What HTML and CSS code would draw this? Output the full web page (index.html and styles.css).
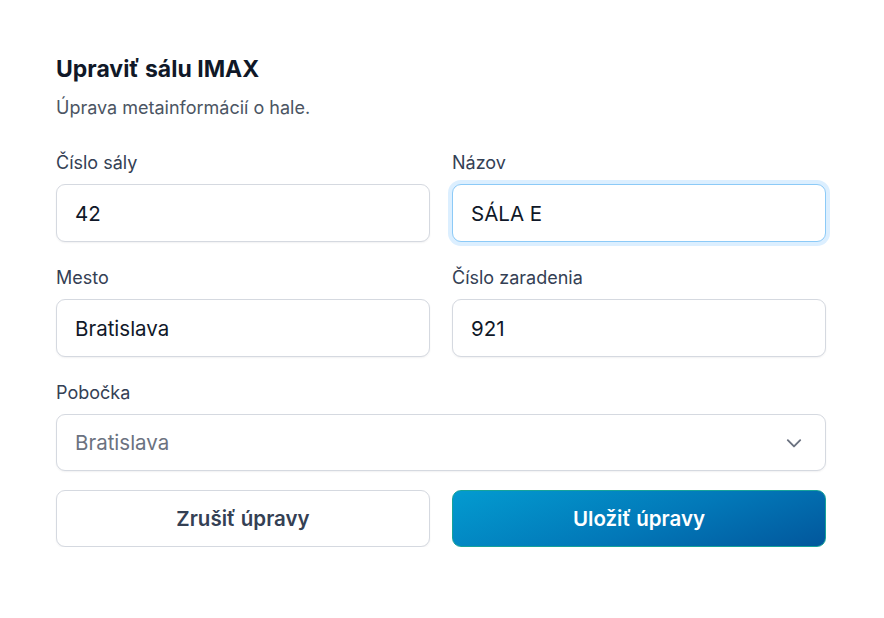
FILE: index.html
```html
<!DOCTYPE html>
<html lang="sk">
<head>
<meta charset="utf-8">
<title>Upraviť sálu IMAX</title>
<link rel="stylesheet" href="styles.css">
</head>
<body>
<div class="page">
  <form class="card">
    <h1 class="title">Upraviť sálu IMAX</h1>
    <p class="subtitle">Úprava metainformácií o hale.</p>
    <div class="grid">
      <label class="field">
        <span class="label">Číslo sály</span>
        <span class="input">42</span>
      </label>
      <label class="field">
        <span class="label">Názov</span>
        <span class="input focused">SÁLA E</span>
      </label>
      <label class="field">
        <span class="label">Mesto</span>
        <span class="input">Bratislava</span>
      </label>
      <label class="field">
        <span class="label">Číslo zaradenia</span>
        <span class="input">921</span>
      </label>
      <label class="field full">
        <span class="label">Pobočka</span>
        <span class="input select">
          <span class="placeholder">Bratislava</span>
          <svg class="chev" width="18" height="18" viewBox="0 0 16 16" fill="none"><path d="M2.5 5.5 8 11l5.5-5.5" stroke="#6b7280" stroke-width="1.7" stroke-linecap="round" stroke-linejoin="round"/></svg>
        </span>
      </label>
    </div>
    <div class="actions">
      <button type="button" class="btn cancel">Zrušiť úpravy</button>
      <button type="button" class="btn save">Uložiť úpravy</button>
    </div>
  </form>
</div>
</body>
</html>
```
FILE: styles.css
```css
* { box-sizing: border-box; }
html, body { margin: 0; background: #ffffff; }
body {
  font-family: Inter, "Noto Sans", "Liberation Sans", sans-serif;
  color: #111827;
}
.page { padding: 54px 58px 0 56px; }
.card { width: 770px; }
.title {
  margin: 0;
  font-size: 23px;
  line-height: 30px;
  font-weight: 650;
  color: #101828;
}
.subtitle {
  margin: 9.5px 0 0;
  font-size: 18px;
  line-height: 27px;
  color: #4b5563;
}
.grid {
  margin-top: 28px;
  display: grid;
  grid-template-columns: 1fr 1fr;
  column-gap: 22px;
  row-gap: 21.5px;
}
.field { display: flex; flex-direction: column; gap: 8.5px; }
.field.full { grid-column: 1 / -1; }
.label {
  font-size: 18px;
  line-height: 27px;
  font-weight: 400;
  color: #344054;
}
.input {
  height: 58px;
  display: flex;
  align-items: center;
  padding: 0 18px;
  border: 1.5px solid #d5d9e0;
  border-radius: 9px;
  background: #fff;
  font-size: 20.5px;
  color: #101828;
  box-shadow: 0 1px 2px rgba(16, 24, 40, 0.06);
}
.input.focused {
  border-color: #8ccaf7;
  box-shadow: 0 0 0 4px #dcefff;
}
.select { justify-content: space-between; height: 57px; }
.placeholder { color: #6b7280; }
.chev { margin-right: 4px; }
.actions {
  margin-top: 19px;
  display: grid;
  grid-template-columns: 1fr 1fr;
  column-gap: 22px;
}
.btn {
  height: 57px;
  border-radius: 9px;
  font-family: inherit;
  font-size: 20.5px;
  font-weight: 600;
  cursor: pointer;
}
.cancel {
  background: #fff;
  border: 1.5px solid #d5d9e0;
  color: #344054;
  box-shadow: 0 1px 2px rgba(16, 24, 40, 0.06);
}
.save {
  background: linear-gradient(160deg, #039bd0 0%, #0278b8 55%, #02579c 100%);
  border: 1px solid #17a39a;
  color: #ffffff;
}
```
